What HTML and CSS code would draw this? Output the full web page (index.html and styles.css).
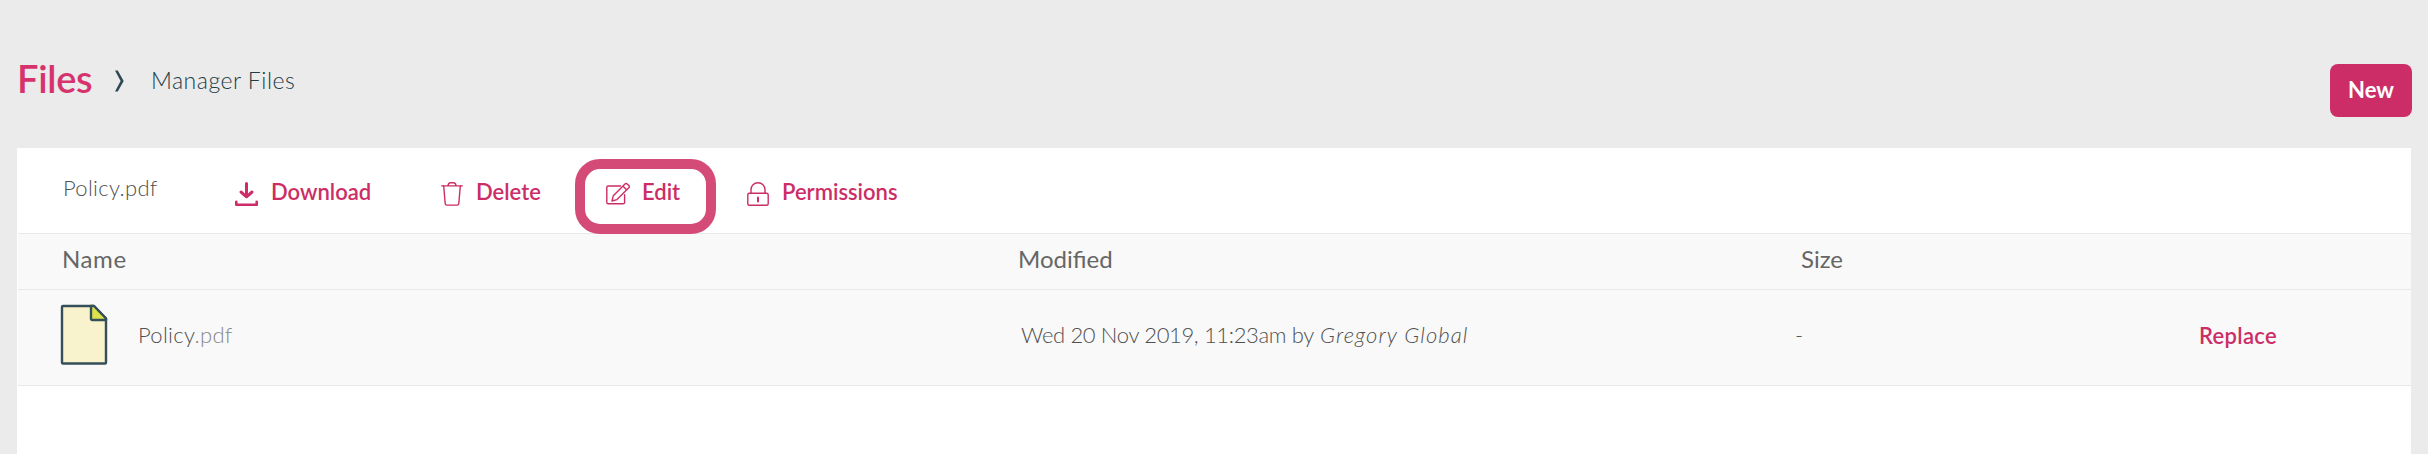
FILE: index.html
```
<!DOCTYPE html>
<html lang="en">
<head>
    <meta charset="UTF-8">
    <meta name="viewport" content="width=device-width, initial-scale=1.0">
    <title>Manager Files</title>
    <link rel="stylesheet" href="styles.css">
</head>
<body>
    <header class="page-header">
        <h1><a href="#">Files</a></h1>
        <svg class="chevron" width="12" height="22" viewBox="0 0 12 22">
            <path d="M1 0.5h2.800L9.700 11 3.800 21.500H1L6.600 11z"/>
        </svg>
        <span class="crumb">Manager Files</span>
        <button type="button" class="new-button">New</button>
    </header>

    <main class="panel">
        <div class="toolbar">
            <span class="selected-file">Policy.pdf</span>
            <a href="#" class="action">
                <svg class="icon" width="24" height="24" viewBox="0 0 24 24">
                    <path d="M11.5 1.5v13M6 10l5.5 4.8L17 10" stroke-width="3"/>
                    <path d="M1.3 19.8v3h20.4v-3" stroke-width="2.6"/>
                </svg>
                <span>Download</span>
            </a>
            <a href="#" class="action">
                <svg class="icon" width="24" height="24" viewBox="0 0 24 24">
                    <path d="M1.7 3.9h20.6M8 3.5C8.4 1.6 9.4.8 10.5.8h3c1.1 0 2.1.8 2.5 2.7"/>
                    <path d="M3.7 4l1.5 17.6c.1 1 .6 1.5 1.6 1.5h10.4c1 0 1.5-.5 1.6-1.5L20.3 4"/>
                </svg>
                <span>Delete</span>
            </a>
            <a href="#" class="action highlighted">
                <svg class="icon" width="24" height="24" viewBox="0 0 24 24">
                    <path d="M14.5 4H2.2C1.4 4 .8 4.6.8 5.400v15c0 .8.6 1.4 1.4 1.4h15c.8 0 1.4-.6 1.4-1.4v-7.6"/>
                    <path d="M6 19l1.300-5.300L19 2c.7-.7 1.500-.7 2.200 0l1.600 1.600c.7.7.7 1.500 0 2.200L11 17.600zM16.900 4.100l3.800 3.800"/>
                </svg>
                <span>Edit</span>
            </a>
            <a href="#" class="action">
                <svg class="icon" width="24" height="24" viewBox="0 0 24 24">
                    <rect x="1.8" y="11.2" width="20.4" height="12" rx="1.5"/>
                    <path d="M5 11V7.800C5 3.600 8 .8 12 .8s7 2.800 7 7V11"/>
                    <path d="M12 15.500v4" stroke-width="2"/>
                </svg>
                <span>Permissions</span>
            </a>
        </div>

        <div class="file-table">
            <div class="row head">
                <span>Name</span>
                <span>Modified</span>
                <span class="head-size">Size</span>
            </div>
            <div class="row file">
                <div class="file-name">
                    <svg class="file-icon" width="48" height="62" viewBox="0 0 48 62">
                        <path d="M3 2h31l12 12.500V58.500a1 1 0 0 1-1 1H3a1 1 0 0 1-1-1V3a1 1 0 0 1 1-1z" fill="#f8f2cd"/>
                        <path d="M31 2h3l12 12.500V16H32.500a1.500 1.500 0 0 1-1.500-1.500z" fill="#dbe04b"/>
                    </svg>
                    <span>Policy<span class="extension">.pdf</span></span>
                </div>
                <span class="modified"><span class="date">Wed 20 Nov 2019, 11:23am by</span> <i>Gregory Global</i></span>
                <span>-</span>
                <a href="#" class="replace">Replace</a>
            </div>
        </div>
    </main>
</body>
</html>
```
FILE: styles.css
```
* {
    margin: 0;
    padding: 0;
    box-sizing: border-box;
}

body {
    font-family: Lato, "Open Sans", sans-serif;
    font-size: 22px;
    font-weight: 300;
    color: #505050;
    background: #ebebeb;
    min-height: 100vh;
    padding: 0 17px;
    display: flex;
    flex-direction: column;
}

a {
    color: #cc2d66;
    font-weight: 600;
    text-decoration: none;
}

.page-header {
    display: flex;
    align-items: flex-start;
    height: 148px;
    padding-top: 48px;
}

.page-header h1 {
    width: 97px;
    font-size: 38px;
    line-height: 60px;
    letter-spacing: -0.3px;
}

.page-header h1 a {
    color: #d6336c;
}

.chevron {
    margin-top: 21.5px;
    fill: #2f4a54;
}

.crumb {
    margin-left: 25px;
    color: #223c46;
    font-size: 23px;
    line-height: 64px;
    letter-spacing: 0.5px;
}

.new-button {
    width: 82px;
    height: 53px;
    margin: 16px -1px 0 auto;
    padding-bottom: 2px;
    border: none;
    border-radius: 8px;
    background: #cc2d66;
    color: white;
    font: 700 22px Lato, "Open Sans", sans-serif;
    cursor: pointer;
}

.panel {
    flex: 1;
    background: white;
}

.toolbar {
    display: grid;
    grid-template-columns: 172px 205px 166px 140px auto;
    align-items: start;
    height: 85px;
    padding: 24px 0 0 46px;
}

.selected-file {
    line-height: 31px;
    letter-spacing: 0.3px;
}

.action {
    position: relative;
    display: flex;
    gap: 12px;
    line-height: 39px;
}

.icon {
    margin-top: 10px;
    fill: none;
    stroke: #cc2d66;
    stroke-width: 1.4;
    stroke-linecap: round;
    stroke-linejoin: round;
}

/* ring around the active action */
.highlighted::after {
    content: "";
    position: absolute;
    top: -13px;
    left: -31px;
    box-sizing: border-box;
    width: 141px;
    height: 75px;
    border: 10px solid #d54b78;
    border-radius: 25px;
}

.file-table {
    margin-left: 1px;
    background: #f9f9f9;
    border-top: 1px solid #e8e8e8;
}

.row {
    display: grid;
    grid-template-columns: 958px 777px 404px auto;
    padding-left: 42px;
    border-bottom: 1px solid #e8e8e8;
}

.head {
    height: 56px;
    font-size: 24px;
    font-weight: 400;
    line-height: 50px;
    color: #666;
}

.head > :first-child {
    padding-left: 2px;
    letter-spacing: 0.6px;
}

.head-size {
    padding-left: 6px;
}

.file {
    height: 96px;
    line-height: 89px;
}

.file-name {
    display: flex;
    gap: 30px;
    letter-spacing: 0.3px;
}

.file-icon {
    margin-top: 14px;
    stroke: #334f59;
    stroke-width: 2.4;
    stroke-linejoin: round;
}

.extension {
    color: #888;
}

.modified {
    padding-left: 3px;
}

.date {
    letter-spacing: -0.35px;
}

.modified i {
    letter-spacing: 1.1px;
}

.replace {
    line-height: 91px;
    letter-spacing: 0.3px;
}
```
